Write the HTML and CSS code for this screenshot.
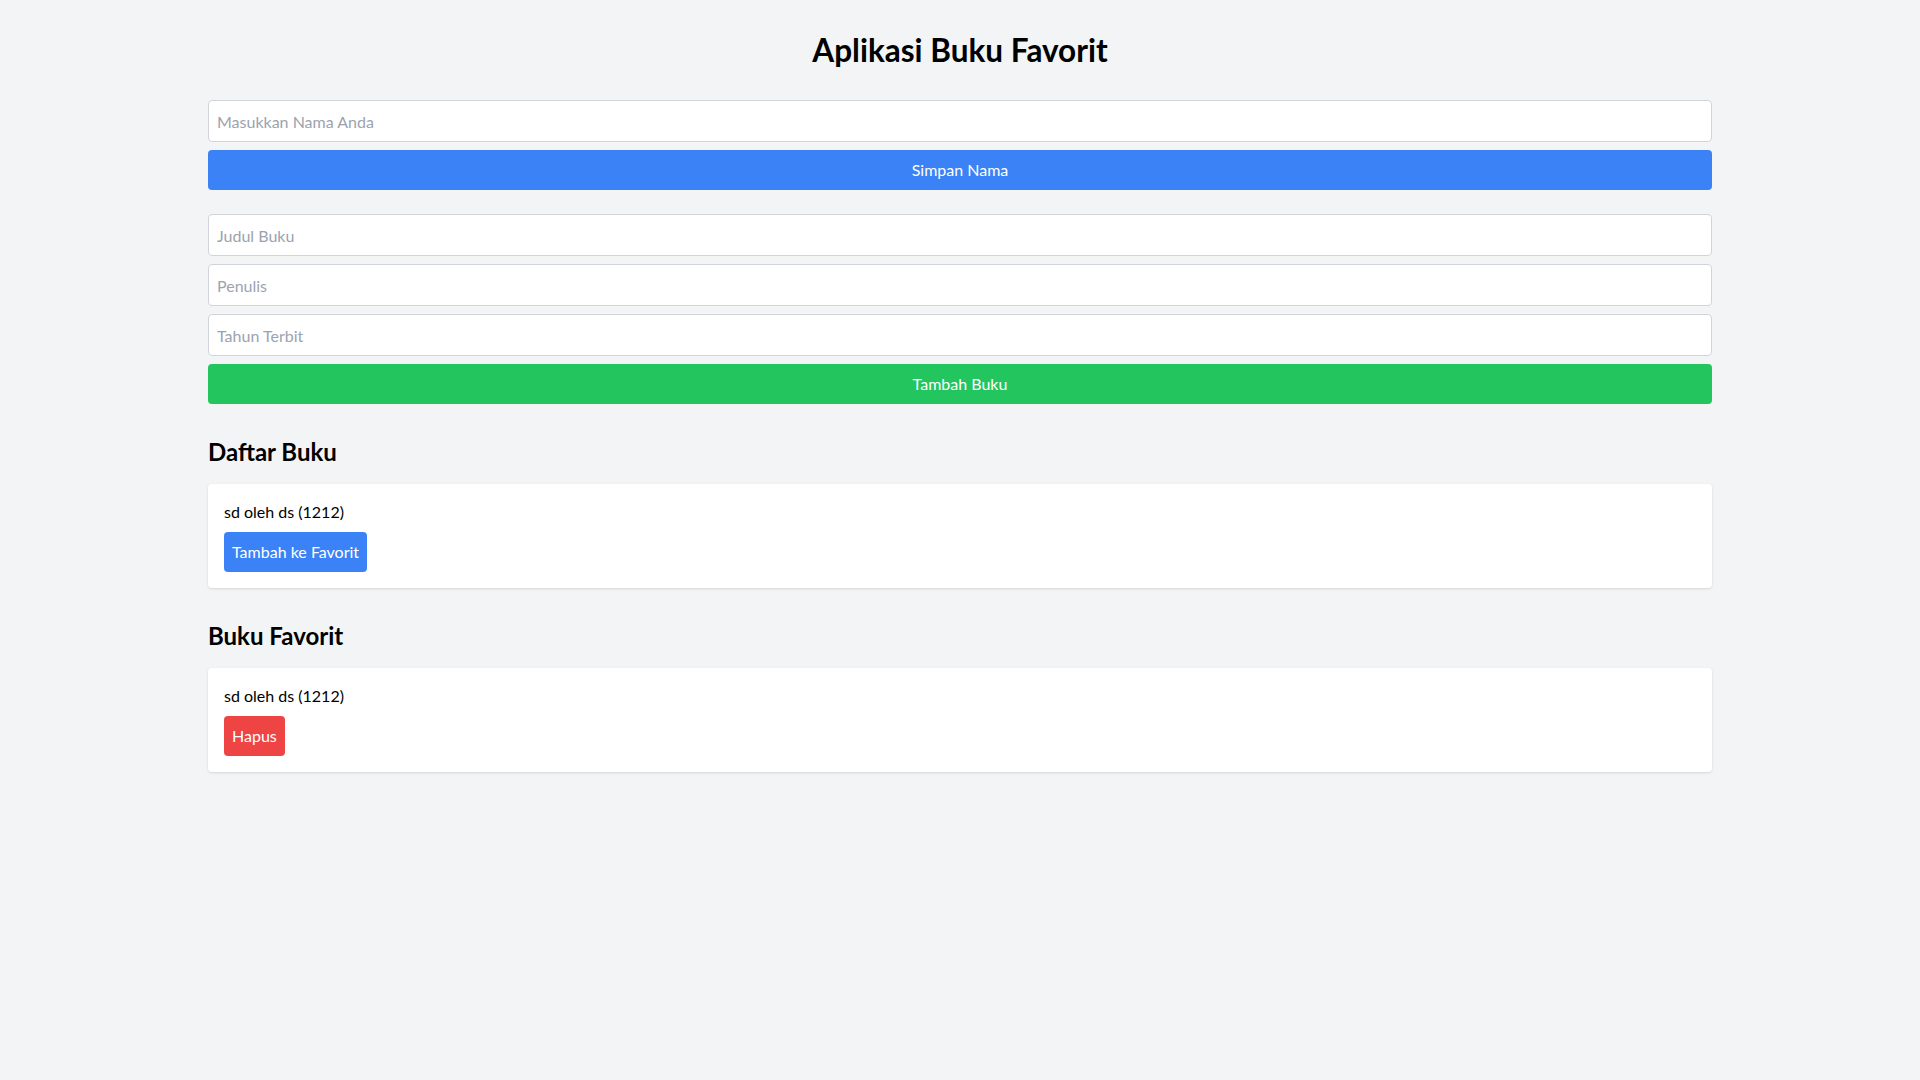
FILE: index.html
```html
<!DOCTYPE html>
<html lang="id">
<head>
<meta charset="utf-8">
<title>Aplikasi Buku Favorit</title>
<link rel="stylesheet" href="styles.css">
</head>
<body>
<div class="container">
  <h1 class="title">Aplikasi Buku Favorit</h1>
  <div class="form-block">
    <input class="field" type="text" placeholder="Masukkan Nama Anda">
    <button class="btn btn-blue btn-full">Simpan Nama</button>
  </div>
  <div class="form-block">
    <input class="field" type="text" placeholder="Judul Buku">
    <input class="field" type="text" placeholder="Penulis">
    <input class="field" type="text" placeholder="Tahun Terbit">
    <button class="btn btn-green btn-full">Tambah Buku</button>
  </div>
  <h2 class="section-title">Daftar Buku</h2>
  <div class="card">
    <p class="card-text">sd oleh ds (1212)</p>
    <button class="btn btn-blue">Tambah ke Favorit</button>
  </div>
  <h2 class="section-title">Buku Favorit</h2>
  <div class="card">
    <p class="card-text">sd oleh ds (1212)</p>
    <button class="btn btn-red">Hapus</button>
  </div>
</div>
</body>
</html>
```
FILE: styles.css
```css
* { box-sizing: border-box; }
html, body { margin: 0; padding: 0; }
body {
  background: #f3f4f6;
  font-family: "Lato", "Open Sans", sans-serif;
  font-size: 16px;
  line-height: 24px;
  color: #000;
}
.container {
  max-width: 1536px;
  margin: 0 auto;
  padding: 32px 16px 16px;
}
.title {
  margin: 0 0 32px;
  font-size: 31.5px;
  line-height: 36px;
  font-weight: 700;
  text-align: center;
}
.form-block {
  display: flex;
  flex-direction: column;
  gap: 8px;
  margin-bottom: 24px;
}
.form-block + .form-block { margin-bottom: 0; }
.field {
  display: block;
  width: 100%;
  height: 42px;
  padding: 8px;
  border: 1px solid #d1d5db;
  border-radius: 4px;
  background: #fff;
  font: inherit;
  color: #000;
}
.field::placeholder { color: #9ca3af; }
.btn {
  border: 0;
  border-radius: 4px;
  padding: 8px;
  height: 40px;
  font: inherit;
  color: #fff;
  cursor: pointer;
}
.btn-full { width: 100%; }
.btn-blue { background: #3b82f6; }
.btn-green { background: #22c55e; }
.btn-red { background: #ef4444; }
.section-title {
  margin: 32px 0 16px;
  font-size: 24px;
  line-height: 32px;
  font-weight: 700;
}
.card {
  background: #fff;
  border-radius: 4px;
  padding: 16px;
  box-shadow: 0 1px 3px rgba(0,0,0,0.1), 0 1px 2px -1px rgba(0,0,0,0.1);
}
.card-text { margin: 0 0 8px; }
```
